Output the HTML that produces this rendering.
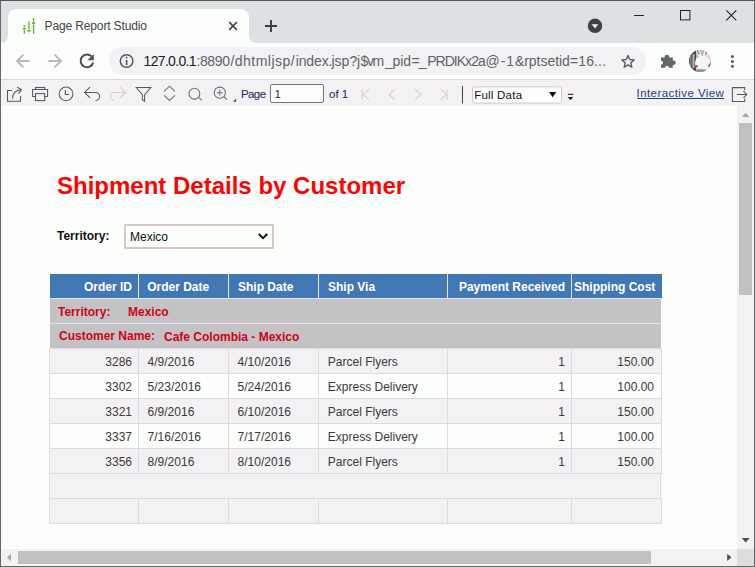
<!DOCTYPE html>
<html><head><meta charset="utf-8">
<style>
*{box-sizing:border-box;margin:0;padding:0}
html,body{width:755px;height:567px;overflow:hidden;background:#fcfefc;font-family:"Liberation Sans",sans-serif;}
.abs{position:absolute}
#win{position:absolute;left:0;top:0;width:755px;height:567px;background:#fcfefc;overflow:hidden}
#tabstrip{left:1px;top:1px;width:753px;height:42px;background:#dde1e4}
#tab{left:8px;top:9px;width:241px;height:34px;background:#fcfefc;border-radius:8px 8px 0 0}
#tabtitle{left:45px;top:19px;font-size:12px;line-height:14px;color:#404448;white-space:nowrap}
#navbar{left:1px;top:43px;width:753px;height:36px;background:#fcfefc}
#navline{left:1px;top:79px;width:753px;height:1px;background:#d6d7d6}
#omni{left:109px;top:47px;width:537px;height:28px;border-radius:14px;background:#f2f1f4}
.url{top:53px;font-size:14px;line-height:16px;color:#5f6368;white-space:nowrap}
.url.dk{color:#202124}
#apptb{left:1px;top:80px;width:753px;height:26px;background:#f3f1f4}
.tbtxt{z-index:3;font-size:11.5px;line-height:normal;color:#1a2458;white-space:nowrap}
#content{left:1px;top:106px;width:736px;height:443px;background:#fcfefc}
#vsb{left:737px;top:106px;width:17px;height:443px;background:#f3f1f4}
#hsb{left:1px;top:549px;width:736px;height:17px;background:#f3f1f4}
#corner{left:737px;top:549px;width:17px;height:17px;background:#dcdedc}
.thumb{background:#c1c0c3}
#bl{left:0;top:0;width:1px;height:567px;background:#666}
#bt{left:0;top:0;width:755px;height:1px;background:#555}
#br{left:754px;top:0;width:1px;height:567px;background:#666}
#bb{left:0;top:566px;width:755px;height:1px;background:#666}
#title{left:57px;top:172px;font-size:24px;line-height:28px;font-weight:bold;color:#fc0404;white-space:nowrap}
#terrlbl{left:57px;top:229px;font-size:12px;line-height:14px;font-weight:bold;color:#111;white-space:nowrap}
#sel{left:124px;top:224px;width:150px;height:25px;border:2px solid #d9c8c8;background:#fcfefc}
#sel span{position:absolute;left:4px;top:4px;font-size:12px;line-height:14px;color:#111}
/* table */
.cell{position:absolute;font-size:12px;line-height:14px;white-space:nowrap;color:#3a3a3a}
.hd{color:#fff;font-weight:bold}
.red{color:#cc0418;font-weight:bold}
</style></head><body>
<div id="win">
 <div id="tabstrip" class="abs"></div>
 <div id="tab" class="abs"></div>
 <div id="tabtitle" class="abs" style="left:44.6px;letter-spacing:-0.14px">Page Report Studio</div>
 <div id="navbar" class="abs"></div>
 <div id="navline" class="abs"></div>
 <div id="omni" class="abs"></div>
 <div class="abs url dk" style="left:143.5px;letter-spacing:-0.66px">127.0.0.1</div>
 <div class="abs url" style="left:196.4px;letter-spacing:-0.35px">:8890</div>
 <div class="abs url" style="left:230.5px;letter-spacing:0.47px">/dhtmljsp/</div>
 <div class="abs url" style="left:295.8px;letter-spacing:-0.16px">index.</div>
 <div class="abs url" style="left:331.4px;letter-spacing:0.05px">jsp</div>
 <div class="abs url" style="left:349.4px;letter-spacing:-0.3px">?j</div>
 <div class="abs url" style="left:360.5px;letter-spacing:-1.35px">$vm</div>
 <div class="abs url" style="left:384.9px;letter-spacing:-0.1px">_pid</div>
 <div class="abs url" style="left:411.5px;letter-spacing:-1.0px">=_</div>
 <div class="abs url" style="left:427.2px;letter-spacing:-0.97px">PRDIKx2a</div>
 <div class="abs url" style="left:485.6px;letter-spacing:0.9px">@-1&amp;</div>
 <div class="abs url" style="left:524.2px;letter-spacing:-0.03px">rptsetid</div>
 <div class="abs url" style="left:570px;letter-spacing:0.12px">=16...</div>
 <div id="apptb" class="abs"></div>
 <div class="abs" style="left:270px;top:84px;width:54px;height:19px;border:1px solid #767676;border-radius:2px;background:#fcfefc"></div>
 <div class="abs tbtxt" style="left:241px;top:88px;letter-spacing:-0.6px">Page</div>
 <div class="abs tbtxt" style="left:274.6px;top:88px;color:#1a2c60">1</div>
 <div class="abs tbtxt" style="left:329px;top:88px">of 1</div>
 <div class="abs tbtxt" style="left:474.2px;top:89px;letter-spacing:0.23px;color:#101030">Full Data</div>
 <div class="abs tbtxt" style="left:636.5px;top:87px;letter-spacing:0.43px;color:#1c3c7c">Interactive View</div>
 <div id="content" class="abs"></div>
 <div id="vsb" class="abs"></div>
 <div id="hsb" class="abs"></div>
 <div id="corner" class="abs"></div>
 <div class="abs thumb" style="left:739px;top:123px;width:13px;height:172px"></div>
 <div class="abs thumb" style="left:18px;top:551px;width:633px;height:13px"></div>
 <div id="title" class="abs">Shipment Details by Customer</div>
 <div id="terrlbl" class="abs">Territory:</div>
 <div id="sel" class="abs"><span>Mexico</span></div>
 <div class="abs" style="left:50px;top:274px;width:612px;height:24px;background:#4178b4"></div>
<div class="abs" style="left:138px;top:274px;width:1px;height:24px;background:#e6e6e8"></div>
<div class="abs" style="left:228px;top:274px;width:1px;height:24px;background:#e6e6e8"></div>
<div class="abs" style="left:318px;top:274px;width:1px;height:24px;background:#e6e6e8"></div>
<div class="abs" style="left:447px;top:274px;width:1px;height:24px;background:#e6e6e8"></div>
<div class="abs" style="left:571px;top:274px;width:1px;height:24px;background:#e6e6e8"></div>
<div class="abs" style="left:50px;top:298px;width:612px;height:1px;background:#e4e6ea"></div>
<div class="abs" style="left:50px;top:299px;width:611px;height:24px;background:#c4c2c5"></div>
<div class="abs" style="left:50px;top:323px;width:611px;height:1px;background:#e6e4e6"></div>
<div class="abs" style="left:50px;top:324px;width:611px;height:24px;background:#c4c2c5"></div>
<div class="abs" style="left:50px;top:349px;width:611px;height:24px;background:#f3f1f4"></div>
<div class="abs" style="left:50px;top:374px;width:611px;height:24px;background:#fcfefc"></div>
<div class="abs" style="left:50px;top:399px;width:611px;height:24px;background:#f3f1f4"></div>
<div class="abs" style="left:50px;top:424px;width:611px;height:24px;background:#fcfefc"></div>
<div class="abs" style="left:50px;top:449px;width:611px;height:24px;background:#f3f1f4"></div>
<div class="abs" style="left:50px;top:474px;width:611px;height:24px;background:#f3f1f4"></div>
<div class="abs" style="left:50px;top:499px;width:611px;height:24px;background:#f3f1f4"></div>
<div class="abs" style="left:49px;top:348px;width:613px;height:1px;background:#dcdcde"></div>
<div class="abs" style="left:49px;top:373px;width:613px;height:1px;background:#dcdcde"></div>
<div class="abs" style="left:49px;top:398px;width:613px;height:1px;background:#dcdcde"></div>
<div class="abs" style="left:49px;top:423px;width:613px;height:1px;background:#dcdcde"></div>
<div class="abs" style="left:49px;top:448px;width:613px;height:1px;background:#dcdcde"></div>
<div class="abs" style="left:49px;top:473px;width:613px;height:1px;background:#dcdcde"></div>
<div class="abs" style="left:49px;top:498px;width:613px;height:1px;background:#dcdcde"></div>
<div class="abs" style="left:49px;top:523px;width:613px;height:1px;background:#dcdcde"></div>
<div class="abs" style="left:661px;top:473px;width:1px;height:1px;background:#fcfefc"></div>
<div class="abs" style="left:49px;top:348px;width:1px;height:176px;background:#dcdcde"></div>
<div class="abs" style="left:661px;top:348px;width:1px;height:126px;background:#dcdcde"></div>
<div class="abs" style="left:661px;top:499px;width:1px;height:25px;background:#dcdcde"></div>
<div class="abs" style="left:660px;top:474px;width:1px;height:24px;background:#dcdcde"></div>
<div class="abs" style="left:661px;top:474px;width:1px;height:24px;background:#fcfefc"></div>
<div class="abs" style="left:138px;top:348px;width:1px;height:126px;background:#dcdcde"></div>
<div class="abs" style="left:138px;top:498px;width:1px;height:26px;background:#dcdcde"></div>
<div class="abs" style="left:228px;top:348px;width:1px;height:126px;background:#dcdcde"></div>
<div class="abs" style="left:228px;top:498px;width:1px;height:26px;background:#dcdcde"></div>
<div class="abs" style="left:318px;top:348px;width:1px;height:126px;background:#dcdcde"></div>
<div class="abs" style="left:318px;top:498px;width:1px;height:26px;background:#dcdcde"></div>
<div class="abs" style="left:447px;top:348px;width:1px;height:126px;background:#dcdcde"></div>
<div class="abs" style="left:447px;top:498px;width:1px;height:26px;background:#dcdcde"></div>
<div class="abs" style="left:571px;top:348px;width:1px;height:126px;background:#dcdcde"></div>
<div class="abs" style="left:571px;top:498px;width:1px;height:26px;background:#dcdcde"></div>
<div class="cell hd" style="right:623px;top:280px;">Order ID</div>
<div class="cell hd" style="left:147.2px;top:280px;">Order Date</div>
<div class="cell hd" style="left:238px;top:280px;">Ship Date</div>
<div class="cell hd" style="left:328px;top:280px;">Ship Via</div>
<div class="cell hd" style="right:190px;top:280px;">Payment Received</div>
<div class="cell hd" style="left:574px;top:280px;">Shipping Cost</div>
<div class="cell red" style="left:58px;top:305px;">Territory:</div>
<div class="cell red" style="left:128px;top:305px;">Mexico</div>
<div class="cell red" style="left:59px;top:329px;">Customer Name:</div>
<div class="cell red" style="left:164px;top:330px;">Cafe Colombia - Mexico</div>
<div class="cell " style="right:623px;top:355px;">3286</div>
<div class="cell " style="left:147.6px;top:355px;">4/9/2016</div>
<div class="cell " style="left:237.6px;top:355px;">4/10/2016</div>
<div class="cell " style="left:327.8px;top:355px;">Parcel Flyers</div>
<div class="cell " style="right:190px;top:355px;">1</div>
<div class="cell " style="right:101px;top:355px;">150.00</div>
<div class="cell " style="right:623px;top:380px;">3302</div>
<div class="cell " style="left:147.6px;top:380px;">5/23/2016</div>
<div class="cell " style="left:237.6px;top:380px;">5/24/2016</div>
<div class="cell " style="left:327.8px;top:380px;">Express Delivery</div>
<div class="cell " style="right:190px;top:380px;">1</div>
<div class="cell " style="right:101px;top:380px;">100.00</div>
<div class="cell " style="right:623px;top:405px;">3321</div>
<div class="cell " style="left:147.6px;top:405px;">6/9/2016</div>
<div class="cell " style="left:237.6px;top:405px;">6/10/2016</div>
<div class="cell " style="left:327.8px;top:405px;">Parcel Flyers</div>
<div class="cell " style="right:190px;top:405px;">1</div>
<div class="cell " style="right:101px;top:405px;">150.00</div>
<div class="cell " style="right:623px;top:430px;">3337</div>
<div class="cell " style="left:147.6px;top:430px;">7/16/2016</div>
<div class="cell " style="left:237.6px;top:430px;">7/17/2016</div>
<div class="cell " style="left:327.8px;top:430px;">Express Delivery</div>
<div class="cell " style="right:190px;top:430px;">1</div>
<div class="cell " style="right:101px;top:430px;">100.00</div>
<div class="cell " style="right:623px;top:455px;">3356</div>
<div class="cell " style="left:147.6px;top:455px;">8/9/2016</div>
<div class="cell " style="left:237.6px;top:455px;">8/10/2016</div>
<div class="cell " style="left:327.8px;top:455px;">Parcel Flyers</div>
<div class="cell " style="right:190px;top:455px;">1</div>
<div class="cell " style="right:101px;top:455px;">150.00</div>
 <svg class="abs" style="left:0;top:0" width="755" height="567" viewBox="0 0 755 567">
<path d="M1 43A7 7 0 0 0 8 36V43Z M256 43A7 7 0 0 1 249 36V43Z" fill="#fcfefc"/>
<!-- favicon -->
<g fill="#62b62e">
 <rect x="23.65" y="24.9" width="1.4" height="2.6" rx="0.7"/><rect x="23.65" y="30.1" width="1.4" height="3.8" rx="0.7"/>
 <rect x="22.8" y="27.9" width="3.1" height="1.8" rx="0.8"/>
 <rect x="28.1" y="21.2" width="1.6" height="8.2" rx="0.7" fill="#7cc44c"/><rect x="28.3" y="32.8" width="1.2" height="0.9" fill="#8ccf60"/>
 <rect x="27.3" y="29.8" width="3.2" height="1.9" rx="0.8"/>
 <rect x="32.9" y="17.9" width="1.4" height="3.8" rx="0.7"/><rect x="32.9" y="24.5" width="1.4" height="9.4" rx="0.7"/>
 <rect x="32" y="22.1" width="3.2" height="1.9" rx="0.8"/>
</g>
<!-- tab close -->
<path d="M229.2 22.2L236.8 29.8M236.8 22.2L229.2 29.8" stroke="#45474a" stroke-width="1.65" fill="none"/>
<!-- new tab plus -->
<path d="M265 26H277M271 20V32" stroke="#3a3c40" stroke-width="1.9" fill="none"/>
<!-- tab search circle -->
<circle cx="595" cy="25.8" r="7.2" fill="#3e4145"/>
<path d="M591.6 24.2H598.4L595 28.4Z" fill="#eef0f2"/>
<!-- window controls -->
<path d="M634 15.5H644" stroke="#222" stroke-width="1"/>
<rect x="680.5" y="10.5" width="9.4" height="9.4" fill="none" stroke="#222" stroke-width="1"/>
<path d="M726.3 10.4L736.3 20.4M736.3 10.4L726.3 20.4" stroke="#222" stroke-width="1.1" fill="none"/>
<!-- back / forward -->
<g stroke="#b9babc" stroke-width="2" fill="none">
 <path d="M29.6 61H17.6M23.4 54.6L17 61L23.4 67.4"/>
 <path d="M48.4 61H60.4M54.6 54.6L61 61L54.6 67.4"/>
</g>
<!-- reload -->
<path d="M91.6 56.4A6.4 6.4 0 1 0 93.2 62.4" stroke="#4c4e52" stroke-width="2" fill="none"/>
<path d="M93.8 54V60.2H87.6Z" fill="#4c4e52"/>
<!-- info -->
<circle cx="126.6" cy="61" r="6.3" fill="none" stroke="#54575b" stroke-width="1.5"/>
<path d="M126.6 60V65" stroke="#54575b" stroke-width="1.6"/><circle cx="126.6" cy="57.6" r="0.95" fill="#54575b"/>
<!-- star -->
<path d="M628.00 55.40L629.73 59.51L634.18 59.89L630.81 62.81L631.82 67.16L628.00 64.85L624.18 67.16L625.19 62.81L621.82 59.89L626.27 59.51Z" fill="none" stroke="#5a5d61" stroke-width="1.4" stroke-linejoin="round"/>
<!-- puzzle -->
<path d="M661 57.6H664.7A2.3 2.3 0 1 1 669.1 57.6H672.8V60.5A2.3 2.3 0 1 1 672.8 64.9V67.8H669A2 2 0 1 0 665 67.8H661V64.7A2 2 0 1 0 661 60.7Z" fill="#63666a"/>
<!-- avatar -->
<defs><clipPath id="av"><circle cx="700" cy="61" r="11"/></clipPath>
</defs>
<g clip-path="url(#av)"><g>
 <rect x="688" y="49" width="24" height="24" fill="#d8d8d8"/>
 <rect x="694" y="49" width="12" height="9" fill="#b4b4b4"/>
 <rect x="688" y="49" width="8" height="24" fill="#4a4a4c"/>
 <rect x="692.5" y="54" width="2" height="14" fill="#b8b8b8"/>
 <rect x="690" y="56" width="1.5" height="10" fill="#8a8a8a"/>
 <path d="M690 70H710V73H690Z" fill="#6a6a6a"/>
 <ellipse cx="702.5" cy="63" rx="7.6" ry="7.2" fill="#f6f6f6"/>
 <ellipse cx="698.8" cy="53.2" rx="2" ry="4.2" fill="#f2f2f2" transform="rotate(-24 698.8 53.2)"/>
 <ellipse cx="705.6" cy="53.6" rx="2" ry="4.2" fill="#f2f2f2" transform="rotate(22 705.6 53.6)"/>
 <ellipse cx="698.2" cy="52.4" rx="0.9" ry="2.6" fill="#c27a72" transform="rotate(-24 698.2 52.4)"/>
 <ellipse cx="706.2" cy="53" rx="0.9" ry="2.6" fill="#c88078" transform="rotate(22 706.2 53)"/>
 <circle cx="696.4" cy="66.3" r="1.3" fill="#c84840"/>
 <ellipse cx="701" cy="70.6" rx="5" ry="1.6" fill="#9a9a9a"/>
 <path d="M708 66L711 62V70Z" fill="#555"/>
</g></g>
<!-- menu dots -->
<g fill="#5d6064"><circle cx="732.4" cy="56.6" r="1.55"/><circle cx="732.4" cy="61.5" r="1.55"/><circle cx="732.4" cy="66.3" r="1.55"/></g>
<!-- app toolbar icons -->
<g stroke="#58585c" stroke-width="1.05" fill="none">
 <!-- export -->
 <path d="M12 90.4H7.5V101.3H20.5V96"/>
 <path d="M12.4 98.6C12.6 93.6 16 90 21.2 89.4M17 87.2L21.4 89.4L18.6 93.6"/>
 <!-- print -->
 <rect x="35.5" y="87.5" width="9.2" height="2"/>
 <path d="M35.5 96.4H32.6V89.5H47.6V96.4H44.7"/>
 <rect x="35.5" y="93.6" width="9.2" height="7"/>
 <!-- clock -->
 <circle cx="66.05" cy="93.9" r="6.85"/>
 <path d="M65.4 90.2V94.5H69" stroke-width="1.2"/>
 <!-- undo -->
 <path d="M90.1 87.2L84.5 92.4L90.1 97.8M84.6 92.4H95.7A4 4 0 0 1 95.5 100.4"/>
 <!-- filter -->
 <path d="M136.3 87.5H150.8L144.6 94.6V101.2L142.4 99.8V94.6Z"/>
 <!-- up/down -->
 <path d="M164.1 91.3L169.5 86.2L174.9 91.3M164.1 95.3L169.5 100.5L174.9 95.3" stroke="#707074"/>
 <!-- search -->
 <g stroke="#6c6c70"><circle cx="194.4" cy="93.7" r="5.4"/><path d="M198.4 97.4L202 100.3"/></g>
 <!-- zoom -->
 <g stroke="#6c6c70"><circle cx="219.8" cy="92.7" r="5.6"/><path d="M223.9 96.6L227 99.7M216.9 92.7H222.7M219.8 89.8V95.6"/></g>
 <!-- logout -->
 <path d="M744.7 90.2V87.6H732.4V101.5H744.7V98.6"/>
 <path d="M736.8 94.5H746.6M743.4 91.1L746.8 94.5L743.4 97.9"/>
</g>
<!-- redo (disabled) -->
<path d="M120.1 87.2L125.6 92.4L120.1 97.8M125.5 92.4H114.2A4 4 0 0 0 114.5 100.4" stroke="#d6cccb" stroke-width="1.05" fill="none"/>
<path d="M236.2 98.4V101.8H232.8Z" fill="#555"/>
<!-- page nav (disabled) -->
<g stroke="#d8cfcd" stroke-width="1.05" fill="none">
 <path d="M362.2 89.2V99.6M369 89.2L363.2 94.4L369 99.6"/>
 <path d="M394.7 89.2L389.2 94.4L394.7 99.6"/>
 <path d="M415.1 89.2L420.8 94.4L415.1 99.6"/>
 <path d="M440.9 89.2L446.4 94.4L440.9 99.6M447 89.2V99.6"/>
</g>
<rect x="462" y="86" width="1" height="17.5" fill="#444"/>
<rect x="472.5" y="86.9" width="89" height="16.2" rx="2" fill="#fcfefc" stroke="#d8c9c3" stroke-width="1"/>
<!-- full data arrow -->
<path d="M549 92H556.3L552.65 97.2Z" fill="#111"/>
<!-- toolbar options -->
<rect x="567.8" y="93.8" width="5.4" height="1.1" fill="#2a2a2e"/>
<path d="M567.6 96.9H573.4L570.5 100.2Z" fill="#2a2a2e"/>
<!-- link underline -->
<rect x="637.4" y="98" width="86.8" height="1" fill="#1c3c7c"/>

<!-- select chevron -->
<path d="M258.8 234L263 238.2L267.2 234" stroke="#111" stroke-width="2" fill="none"/>
<!-- scrollbar arrows -->
<path d="M741.8 117H749.4L745.6 112.8Z" fill="#a8a8aa"/>
<path d="M741.8 538H749.6L745.7 542.4Z" fill="#4e4e50"/>
<path d="M11 553.8V561.2L7 557.5Z" fill="#a4a4a6"/>
<path d="M727.2 553.7V561L731.4 557.35Z" fill="#4e4e50"/>
</svg>

 <div id="bl" class="abs"></div><div id="bt" class="abs"></div><div id="br" class="abs"></div><div id="bb" class="abs"></div>
</div>
</body></html>
